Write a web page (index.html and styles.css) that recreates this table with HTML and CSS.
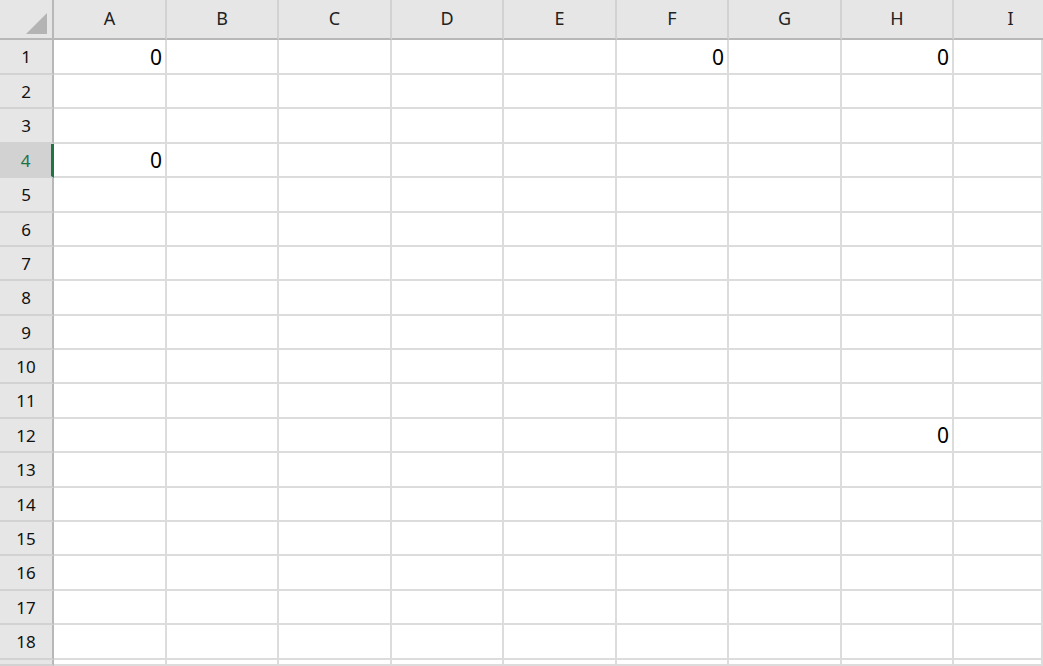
FILE: index.html
```html
<!DOCTYPE html>
<html>
<head>
<meta charset="utf-8">
<link rel="stylesheet" href="styles.css">
</head>
<body>
<div class="sheet">
  <div class="corner"><svg class="tri" width="52" height="38" viewBox="0 0 52 38"><polygon points="47,13 47,34 26,34" fill="#b4b4b4"/></svg></div>
  <div class="colhead">A</div><div class="colhead">B</div><div class="colhead">C</div><div class="colhead">D</div><div class="colhead">E</div><div class="colhead">F</div><div class="colhead">G</div><div class="colhead">H</div><div class="colhead last">I</div>

  <div class="rowhead">1</div><div class="cell">0</div><div class="cell"></div><div class="cell"></div><div class="cell"></div><div class="cell"></div><div class="cell">0</div><div class="cell"></div><div class="cell">0</div><div class="cell"></div>
  <div class="rowhead">2</div><div class="cell"></div><div class="cell"></div><div class="cell"></div><div class="cell"></div><div class="cell"></div><div class="cell"></div><div class="cell"></div><div class="cell"></div><div class="cell"></div>
  <div class="rowhead">3</div><div class="cell"></div><div class="cell"></div><div class="cell"></div><div class="cell"></div><div class="cell"></div><div class="cell"></div><div class="cell"></div><div class="cell"></div><div class="cell"></div>
  <div class="rowhead sel">4</div><div class="cell">0</div><div class="cell"></div><div class="cell"></div><div class="cell"></div><div class="cell"></div><div class="cell"></div><div class="cell"></div><div class="cell"></div><div class="cell"></div>
  <div class="rowhead">5</div><div class="cell"></div><div class="cell"></div><div class="cell"></div><div class="cell"></div><div class="cell"></div><div class="cell"></div><div class="cell"></div><div class="cell"></div><div class="cell"></div>
  <div class="rowhead">6</div><div class="cell"></div><div class="cell"></div><div class="cell"></div><div class="cell"></div><div class="cell"></div><div class="cell"></div><div class="cell"></div><div class="cell"></div><div class="cell"></div>
  <div class="rowhead">7</div><div class="cell"></div><div class="cell"></div><div class="cell"></div><div class="cell"></div><div class="cell"></div><div class="cell"></div><div class="cell"></div><div class="cell"></div><div class="cell"></div>
  <div class="rowhead">8</div><div class="cell"></div><div class="cell"></div><div class="cell"></div><div class="cell"></div><div class="cell"></div><div class="cell"></div><div class="cell"></div><div class="cell"></div><div class="cell"></div>
  <div class="rowhead">9</div><div class="cell"></div><div class="cell"></div><div class="cell"></div><div class="cell"></div><div class="cell"></div><div class="cell"></div><div class="cell"></div><div class="cell"></div><div class="cell"></div>
  <div class="rowhead">10</div><div class="cell"></div><div class="cell"></div><div class="cell"></div><div class="cell"></div><div class="cell"></div><div class="cell"></div><div class="cell"></div><div class="cell"></div><div class="cell"></div>
  <div class="rowhead">11</div><div class="cell"></div><div class="cell"></div><div class="cell"></div><div class="cell"></div><div class="cell"></div><div class="cell"></div><div class="cell"></div><div class="cell"></div><div class="cell"></div>
  <div class="rowhead">12</div><div class="cell"></div><div class="cell"></div><div class="cell"></div><div class="cell"></div><div class="cell"></div><div class="cell"></div><div class="cell"></div><div class="cell">0</div><div class="cell"></div>
  <div class="rowhead">13</div><div class="cell"></div><div class="cell"></div><div class="cell"></div><div class="cell"></div><div class="cell"></div><div class="cell"></div><div class="cell"></div><div class="cell"></div><div class="cell"></div>
  <div class="rowhead">14</div><div class="cell"></div><div class="cell"></div><div class="cell"></div><div class="cell"></div><div class="cell"></div><div class="cell"></div><div class="cell"></div><div class="cell"></div><div class="cell"></div>
  <div class="rowhead">15</div><div class="cell"></div><div class="cell"></div><div class="cell"></div><div class="cell"></div><div class="cell"></div><div class="cell"></div><div class="cell"></div><div class="cell"></div><div class="cell"></div>
  <div class="rowhead">16</div><div class="cell"></div><div class="cell"></div><div class="cell"></div><div class="cell"></div><div class="cell"></div><div class="cell"></div><div class="cell"></div><div class="cell"></div><div class="cell"></div>
  <div class="rowhead">17</div><div class="cell"></div><div class="cell"></div><div class="cell"></div><div class="cell"></div><div class="cell"></div><div class="cell"></div><div class="cell"></div><div class="cell"></div><div class="cell"></div>
  <div class="rowhead">18</div><div class="cell"></div><div class="cell"></div><div class="cell"></div><div class="cell"></div><div class="cell"></div><div class="cell"></div><div class="cell"></div><div class="cell"></div><div class="cell"></div>
  <div class="rowhead"></div><div class="cell"></div><div class="cell"></div><div class="cell"></div><div class="cell"></div><div class="cell"></div><div class="cell"></div><div class="cell"></div><div class="cell"></div><div class="cell"></div>
</div>
</body>
</html>
```

FILE: styles.css
```css
html, body {
  margin: 0;
  padding: 0;
  background: #ffffff;
  overflow: hidden;
  width: 1043px;
  height: 666px;
}

.sheet {
  display: grid;
  width: 1043px;
  grid-template-columns: 54px 113px 112px 113px 112px 113px 112px 113px 112px 89px;
  grid-template-rows: 40px 35px 34px 35px 34px 35px 34px 34px 35px 34px 34px 35px 34px 35px 34px 34px 35px 34px 35px 6px;
  font-family: "Noto Sans", "DejaVu Sans", sans-serif;
  height: 666px;
}

.sheet > div {
  box-sizing: border-box;
  display: flex;
  align-items: center;
  overflow: hidden;
}

.cell {
  border-right: 2px solid #dcdcdc;
  border-bottom: 2px solid #dcdcdc;
  justify-content: flex-end;
  padding-right: 3px;
  font-size: 21px;
  color: #000;
}

.corner {
  background: #e6e6e6;
  border-right: 2px solid #b8b8b8;
  border-bottom: 2px solid #b8b8b8;
}

.tri {
  display: block;
}

.colhead {
  background: #e6e6e6;
  border-right: 2px solid #d2d2d2;
  border-bottom: 2px solid #b8b8b8;
  justify-content: center;
  font-size: 18px;
  color: #222;
  padding-bottom: 2px;
}

.colhead.last {
  border-right: none;
  padding-left: 24px;
}

.rowhead {
  background: #e6e6e6;
  border-right: 2px solid #b8b8b8;
  border-bottom: 2px solid #d2d2d2;
  justify-content: center;
  font-size: 17px;
  color: #111;
}

.rowhead.sel {
  background: #d2d2d2;
  color: #217346;
  border-right: 3px solid #217346;
}
```
